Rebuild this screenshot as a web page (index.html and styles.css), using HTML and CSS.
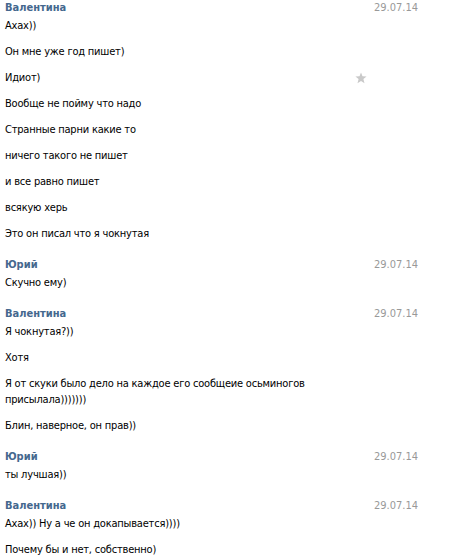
FILE: index.html
```html
<!DOCTYPE html>
<html lang="ru">
<head>
<meta charset="utf-8">
<link rel="stylesheet" href="styles.css">
</head>
<body>
<div class="log">
  <div class="group">
    <div class="head"><span class="name">Валентина</span><span class="date">29.07.14</span></div>
    <div class="msg"><div class="text">Ахах))</div></div>
    <div class="msg"><div class="text">Он мне уже год пишет)</div></div>
    <div class="msg"><div class="text">Идиот)</div><div class="mark"><svg viewBox="0 0 12 12" width="12" height="12"><path d="M6 0.5 L7.5 4.3 L11.6 4.5 L8.4 7.1 L9.5 11.2 L6 8.9 L2.5 11.2 L3.6 7.1 L0.4 4.5 L4.5 4.3 Z" fill="#c9c9c9"/></svg></div></div>
    <div class="msg"><div class="text">Вообще не пойму что надо</div></div>
    <div class="msg"><div class="text">Странные парни какие то</div></div>
    <div class="msg"><div class="text">ничего такого не пишет</div></div>
    <div class="msg"><div class="text">и все равно пишет</div></div>
    <div class="msg"><div class="text">всякую херь</div></div>
    <div class="msg"><div class="text">Это он писал что я чокнутая</div></div>
  </div>
  <div class="group">
    <div class="head"><span class="name">Юрий</span><span class="date">29.07.14</span></div>
    <div class="msg"><div class="text">Скучно ему)</div></div>
  </div>
  <div class="group">
    <div class="head"><span class="name">Валентина</span><span class="date">29.07.14</span></div>
    <div class="msg"><div class="text">Я чокнутая?))</div></div>
    <div class="msg"><div class="text">Хотя</div></div>
    <div class="msg"><div class="text">Я от скуки было дело на каждое его сообщеие осьминогов присылала)))))))</div></div>
    <div class="msg"><div class="text">Блин, наверное, он прав))</div></div>
  </div>
  <div class="group">
    <div class="head"><span class="name">Юрий</span><span class="date">29.07.14</span></div>
    <div class="msg"><div class="text">ты лучшая))</div></div>
  </div>
  <div class="group">
    <div class="head"><span class="name">Валентина</span><span class="date">29.07.14</span></div>
    <div class="msg"><div class="text">Ахах)) Ну а че он докапывается))))</div></div>
    <div class="msg"><div class="text">Почему бы и нет, собственно)</div></div>
  </div>
</div>
</body>
</html>
```
FILE: styles.css
```css
html, body {
  margin: 0;
  padding: 0;
  background: #fff;
}
body {
  font-family: "DejaVu Sans Condensed", "DejaVu Sans", sans-serif;
  font-size: 11px;
  line-height: 16px;
  letter-spacing: -0.2px;
  color: #000;
}
.log {
  display: flex;
  flex-direction: column;
  gap: 15px;
  padding: 0 0 0 5px;
}
.group {
  display: flex;
  flex-direction: column;
  gap: 10px;
}
.head {
  display: grid;
  grid-template-columns: 369px 80px;
  margin-bottom: -8px;
}
.name {
  font-weight: bold;
  letter-spacing: 0;
  color: #45688e;
}
.date {
  color: #999;
  letter-spacing: 0;
}
.msg {
  display: grid;
  grid-template-columns: 350px 12px;
}
.mark {
  display: flex;
  align-items: center;
  justify-content: center;
}
.mark svg {
  display: block;
}
```
